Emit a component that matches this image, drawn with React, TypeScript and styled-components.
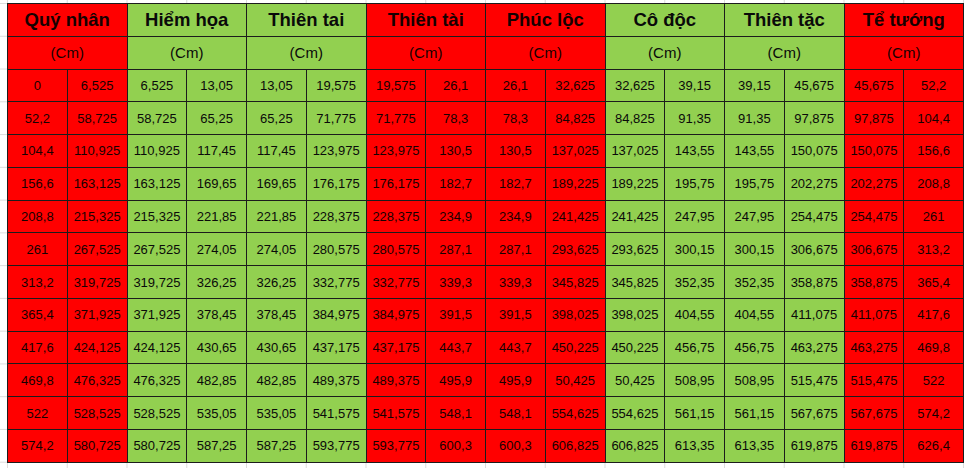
import styled, { createGlobalStyle } from 'styled-components'

type Tone = 'red' | 'green'

const GlobalStyle = createGlobalStyle`
  html, body {
    margin: 0;
    padding: 0;
    background: #ffffff;
  }
  body {
    font-family: 'Liberation Sans', Arial, sans-serif;
  }
`

const colors = {
  red: '#ff0000',
  green: '#92d050',
  line: '#1c1c1c',
  grid: '#dcdcdc',
}

// spreadsheet backdrop, its cell lines peek out around the table
const Sheet = styled.div`
  width: 964px;
  height: 468px;
  overflow: hidden;
  box-sizing: border-box;
  padding: 3px 0 0 7px;
  background-color: #fff;
  background-image: linear-gradient(to right, ${colors.grid} 1px, transparent 1px),
    linear-gradient(to bottom, ${colors.grid} 1px, transparent 1px);
  background-size: 59.75px 32.78px;
  background-position: 7px 3px;
`

const Table = styled.table`
  width: 957px;
  border-collapse: collapse;
  table-layout: fixed;
  border: 1px solid ${colors.line};
`

const Row = styled.tr`
  height: 32.78px;
`

const Cell = styled.td<{ $tone: Tone }>`
  background: ${(p) => colors[p.$tone]};
  border: 1px solid ${colors.line};
  text-align: center;
  vertical-align: middle;
  padding: 0;
  line-height: 1;
  color: ${(p) => (p.$tone === 'red' ? '#160000' : '#0a0a0a')};
  font-size: 13px;
  white-space: nowrap;
`

const TitleCell = styled(Cell)`
  font-size: 18.5px;
  font-weight: bold;
`

const UnitCell = styled(Cell)`
  font-size: 15px;
`

const groups: { name: string; tone: Tone }[] = [
  { name: 'Quý nhân', tone: 'red' },
  { name: 'Hiểm họa', tone: 'green' },
  { name: 'Thiên tai', tone: 'green' },
  { name: 'Thiên tài', tone: 'red' },
  { name: 'Phúc lộc', tone: 'red' },
  { name: 'Cô độc', tone: 'green' },
  { name: 'Thiên tặc', tone: 'green' },
  { name: 'Tể tướng', tone: 'red' },
]

const rows: string[][] = [
  ['0', '6,525', '6,525', '13,05', '13,05', '19,575', '19,575', '26,1', '26,1', '32,625', '32,625', '39,15', '39,15', '45,675', '45,675', '52,2'],
  ['52,2', '58,725', '58,725', '65,25', '65,25', '71,775', '71,775', '78,3', '78,3', '84,825', '84,825', '91,35', '91,35', '97,875', '97,875', '104,4'],
  ['104,4', '110,925', '110,925', '117,45', '117,45', '123,975', '123,975', '130,5', '130,5', '137,025', '137,025', '143,55', '143,55', '150,075', '150,075', '156,6'],
  ['156,6', '163,125', '163,125', '169,65', '169,65', '176,175', '176,175', '182,7', '182,7', '189,225', '189,225', '195,75', '195,75', '202,275', '202,275', '208,8'],
  ['208,8', '215,325', '215,325', '221,85', '221,85', '228,375', '228,375', '234,9', '234,9', '241,425', '241,425', '247,95', '247,95', '254,475', '254,475', '261'],
  ['261', '267,525', '267,525', '274,05', '274,05', '280,575', '280,575', '287,1', '287,1', '293,625', '293,625', '300,15', '300,15', '306,675', '306,675', '313,2'],
  ['313,2', '319,725', '319,725', '326,25', '326,25', '332,775', '332,775', '339,3', '339,3', '345,825', '345,825', '352,35', '352,35', '358,875', '358,875', '365,4'],
  ['365,4', '371,925', '371,925', '378,45', '378,45', '384,975', '384,975', '391,5', '391,5', '398,025', '398,025', '404,55', '404,55', '411,075', '411,075', '417,6'],
  ['417,6', '424,125', '424,125', '430,65', '430,65', '437,175', '437,175', '443,7', '443,7', '450,225', '450,225', '456,75', '456,75', '463,275', '463,275', '469,8'],
  ['469,8', '476,325', '476,325', '482,85', '482,85', '489,375', '489,375', '495,9', '495,9', '50,425', '50,425', '508,95', '508,95', '515,475', '515,475', '522'],
  ['522', '528,525', '528,525', '535,05', '535,05', '541,575', '541,575', '548,1', '548,1', '554,625', '554,625', '561,15', '561,15', '567,675', '567,675', '574,2'],
  ['574,2', '580,725', '580,725', '587,25', '587,25', '593,775', '593,775', '600,3', '600,3', '606,825', '606,825', '613,35', '613,35', '619,875', '619,875', '626,4'],
]

export default function App() {
  return (
    <>
      <GlobalStyle />
      <Sheet>
        <Table>
          <tbody>
            <Row>
              {groups.map((g) => (
                <TitleCell key={g.name} colSpan={2} $tone={g.tone}>
                  {g.name}
                </TitleCell>
              ))}
            </Row>
            <Row>
              {groups.map((g) => (
                <UnitCell key={g.name} colSpan={2} $tone={g.tone}>
                  (Cm)
                </UnitCell>
              ))}
            </Row>
            {rows.map((row, r) => (
              <Row key={r}>
                {row.map((v, i) => (
                  <Cell key={i} $tone={groups[Math.floor(i / 2)].tone}>
                    {v}
                  </Cell>
                ))}
              </Row>
            ))}
          </tbody>
        </Table>
      </Sheet>
    </>
  )
}
